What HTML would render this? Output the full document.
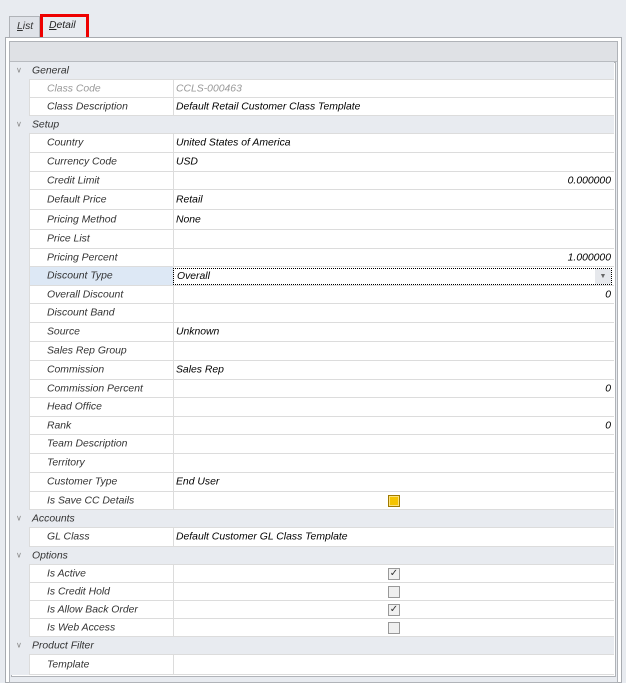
<!DOCTYPE html>
<html><head><style>
body{margin:0;width:626px;height:683px;background:#e8ebf0;font-family:"Liberation Sans",sans-serif;font-style:italic;font-size:10.4px;color:#222;position:relative;overflow:hidden}
.abs{position:absolute}
.row{position:absolute;left:11px;width:603px;border-bottom:1px solid #dcdcdc;box-sizing:border-box}
.hdr{background:#e8ebf0}
.hdr span{position:absolute;left:21px;top:50%;transform:translateY(-50%);color:#333}
.hdr i{position:absolute;left:5px;top:50%;transform:translateY(-60%);font-style:normal;font-size:8px;color:#888}
.dat{background:#fff}
.dat .g{position:absolute;left:0;top:-1px;bottom:-1px;width:18px;background:#e8ebf0}
.dat .l{position:absolute;left:18px;top:0;bottom:0;width:143px;border-right:1px solid #dcdcdc;border-left:1px solid #dcdcdc}
.dat .l span{position:absolute;left:17px;top:50%;transform:translateY(-50%);color:#333}
.dat .v{position:absolute;left:165px;top:50%;transform:translateY(-50%);color:#000}
.dat .r{position:absolute;right:3px;top:50%;transform:translateY(-50%);color:#000}
.cb{position:absolute;left:377px;top:50%;margin-top:-6px;width:10px;height:10px;border:1px solid #999;background:#f0f0f0;font-style:normal;font-size:10px;line-height:10px;text-align:center;color:#333}
</style></head><body>
<div class="abs" style="left:9px;top:16px;width:31px;height:21px;background:#dfe2e8;border:1px solid #b0b3b8;border-bottom:none;box-sizing:border-box"><span class="abs" style="left:7px;top:4px;color:#333"><u>L</u>ist</span></div>
<div class="abs" style="left:40px;top:14px;width:49px;height:26px;border:3px solid #e00;box-sizing:border-box;background:#e8ebf0"><span class="abs" style="left:6px;top:3px;color:#222"><u>D</u>etail</span></div>
<div class="abs" style="left:5px;top:37px;width:617px;height:646px;border:1px solid #a8abb0;box-sizing:border-box;background:#fff"></div>
<div class="abs" style="left:9px;top:41px;width:609px;height:642px;border:1px solid #b0b3b8;box-sizing:border-box;background:#e8ebf0"></div>
<div class="abs" style="left:10px;top:42px;width:607px;height:19px;background:#dfe1e5;border-bottom:1px solid #b8bbc0"></div>
<div class="abs" style="left:11px;top:62px;width:605px;height:615px;border:1px solid #b0b3b8;box-sizing:border-box;background:#fff"></div>

<div class="row hdr" style="top:62px;height:18px"><i>&#8744;</i><span>General</span></div>
<div class="row dat" style="top:80px;height:18px"><div class="g"></div><div class="l"><span style="color:#999">Class Code</span></div><span class="v" style="color:#999">CCLS-000463</span></div>
<div class="row dat" style="top:98px;height:18px"><div class="g"></div><div class="l"><span>Class Description</span></div><span class="v">Default Retail Customer Class Template</span></div>
<div class="row hdr" style="top:116px;height:18px"><i>&#8744;</i><span>Setup</span></div>
<div class="row dat" style="top:134px;height:19px"><div class="g"></div><div class="l"><span>Country</span></div><span class="v">United States of America</span></div>
<div class="row dat" style="top:153px;height:19px"><div class="g"></div><div class="l"><span>Currency Code</span></div><span class="v">USD</span></div>
<div class="row dat" style="top:172px;height:18px"><div class="g"></div><div class="l"><span>Credit Limit</span></div><span class="r">0.000000</span></div>
<div class="row dat" style="top:190px;height:20px"><div class="g"></div><div class="l"><span>Default Price</span></div><span class="v">Retail</span></div>
<div class="row dat" style="top:210px;height:20px"><div class="g"></div><div class="l"><span>Pricing Method</span></div><span class="v">None</span></div>
<div class="row dat" style="top:230px;height:19px"><div class="g"></div><div class="l"><span>Price List</span></div></div>
<div class="row dat" style="top:249px;height:18px"><div class="g"></div><div class="l"><span>Pricing Percent</span></div><span class="r">1.000000</span></div>
<div class="row dat" style="top:267px;height:19px"><div class="g"></div><div class="l" style="background:#dde8f5"><span>Discount Type</span></div>
<div class="abs" style="left:162px;top:1px;width:439px;height:17px;border:1px dotted #000;box-sizing:border-box"><span class="abs" style="left:3px;top:2px;color:#000">Overall</span><div class="abs" style="right:0;top:0;width:16px;height:15px;background:#e6e8ec;font-style:normal;font-size:7px;color:#666;text-align:center;line-height:15px">&#9660;</div></div></div>
<div class="row dat" style="top:286px;height:18px"><div class="g"></div><div class="l"><span>Overall Discount</span></div><span class="r">0</span></div>
<div class="row dat" style="top:304px;height:19px"><div class="g"></div><div class="l"><span>Discount Band</span></div></div>
<div class="row dat" style="top:323px;height:19px"><div class="g"></div><div class="l"><span>Source</span></div><span class="v">Unknown</span></div>
<div class="row dat" style="top:342px;height:19px"><div class="g"></div><div class="l"><span>Sales Rep Group</span></div></div>
<div class="row dat" style="top:361px;height:19px"><div class="g"></div><div class="l"><span>Commission</span></div><span class="v">Sales Rep</span></div>
<div class="row dat" style="top:380px;height:18px"><div class="g"></div><div class="l"><span>Commission Percent</span></div><span class="r">0</span></div>
<div class="row dat" style="top:398px;height:19px"><div class="g"></div><div class="l"><span>Head Office</span></div></div>
<div class="row dat" style="top:417px;height:18px"><div class="g"></div><div class="l"><span>Rank</span></div><span class="r">0</span></div>
<div class="row dat" style="top:435px;height:19px"><div class="g"></div><div class="l"><span>Team Description</span></div></div>
<div class="row dat" style="top:454px;height:19px"><div class="g"></div><div class="l"><span>Territory</span></div></div>
<div class="row dat" style="top:473px;height:19px"><div class="g"></div><div class="l"><span>Customer Type</span></div><span class="v">End User</span></div>
<div class="row dat" style="top:492px;height:18px"><div class="g"></div><div class="l"><span>Is Save CC Details</span></div><div class="cb" style="background:#f5c400;border-color:#a07a00;box-shadow:inset 0 0 0 1px #fde27a"></div></div>
<div class="row hdr" style="top:510px;height:18px"><i>&#8744;</i><span>Accounts</span></div>
<div class="row dat" style="top:528px;height:19px"><div class="g"></div><div class="l"><span>GL Class</span></div><span class="v">Default Customer GL Class Template</span></div>
<div class="row hdr" style="top:547px;height:18px"><i>&#8744;</i><span>Options</span></div>
<div class="row dat" style="top:565px;height:18px"><div class="g"></div><div class="l"><span>Is Active</span></div><div class="cb">&#10003;</div></div>
<div class="row dat" style="top:583px;height:18px"><div class="g"></div><div class="l"><span>Is Credit Hold</span></div><div class="cb"></div></div>
<div class="row dat" style="top:601px;height:18px"><div class="g"></div><div class="l"><span>Is Allow Back Order</span></div><div class="cb">&#10003;</div></div>
<div class="row dat" style="top:619px;height:18px"><div class="g"></div><div class="l"><span>Is Web Access</span></div><div class="cb"></div></div>
<div class="row hdr" style="top:637px;height:18px"><i>&#8744;</i><span>Product Filter</span></div>
<div class="row dat" style="top:655px;height:20px"><div class="g"></div><div class="l"><span>Template</span></div></div>
</body></html>
